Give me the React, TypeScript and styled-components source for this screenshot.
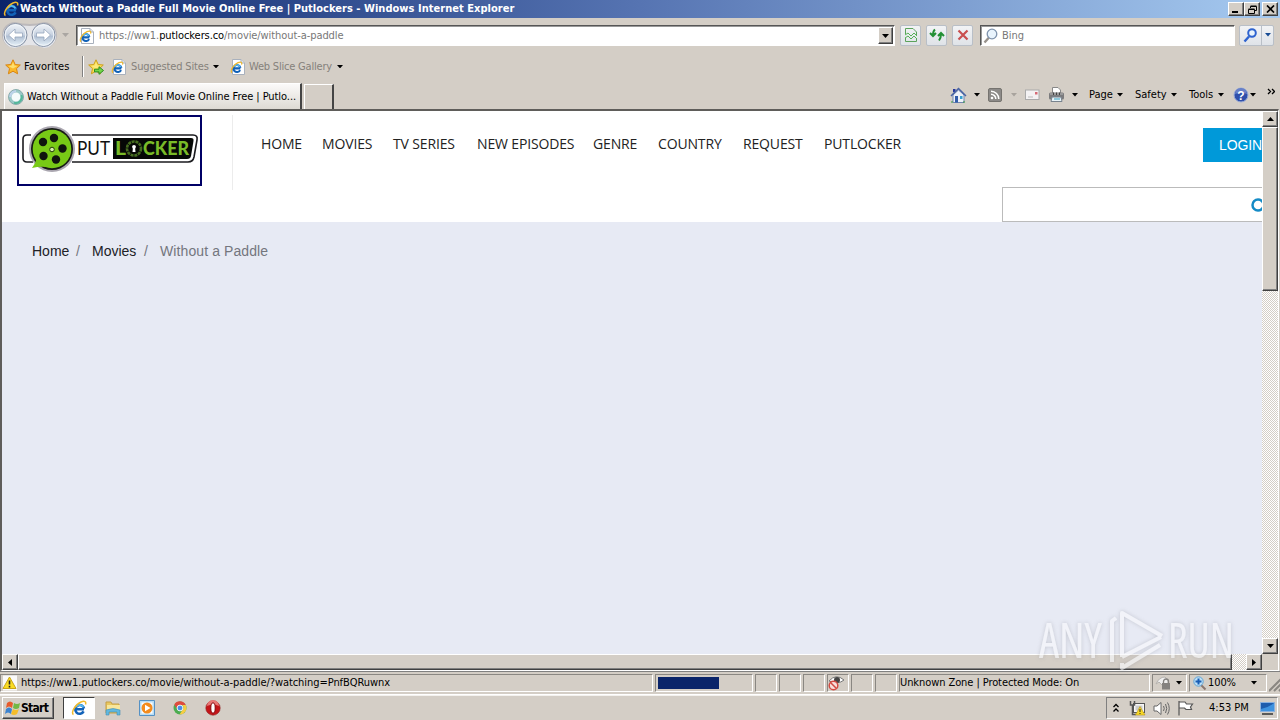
import React from 'react';
import styled, { createGlobalStyle, css } from 'styled-components';

const GlobalStyle = createGlobalStyle`
  * { box-sizing: border-box; }
  body { margin: 0; overflow: hidden; }
  svg { display: block; flex: none; }
`;

const face = '#d4cec6';
const ui = css`
  font-family: 'DejaVu Sans Condensed', 'DejaVu Sans', sans-serif;
  font-stretch: condensed;
  font-size: 11px;
  line-height: 14px;
  white-space: nowrap;
`;
const raised = css`
  border: 1px solid;
  border-color: #fff #404040 #404040 #fff;
  box-shadow: inset -1px -1px #808080;
`;

const Screen = styled.div`
  width: 1280px; height: 720px; overflow: hidden;
  display: flex; flex-direction: column;
  background: ${face}; color: #000; ${ui}
`;
const Text = styled.span<{ $w?: number; $ls?: number; $c?: string; $ml?: number }>`
  flex: none;
  width: ${p => (p.$w ? p.$w + 'px' : 'auto')};
  letter-spacing: ${p => p.$ls ?? 0}px;
  color: ${p => p.$c ?? '#000'};
  margin-left: ${p => p.$ml ?? 0}px;
  white-space: pre;
`;
const Space = styled.div<{ $w?: number }>`
  ${p => (p.$w ? `flex: none; width: ${p.$w}px;` : 'flex: 1;')}
`;

const TitleBar = styled.div`
  height: 18px; flex: none; display: flex; align-items: center; padding: 0 2px 0 3px;
  background: linear-gradient(90deg, #0a246a, #5674b2 50%, #a6caf0);
`;
const Title = styled.div`
  ${ui} font-weight: bold; color: #fff; margin-left: 1px; letter-spacing: 0.03px;
`;
const WinButton = styled.div<{ $ml?: number }>`
  width: 16px; height: 14px; background: ${face}; ${raised}
  margin-left: ${p => p.$ml ?? 0}px;
  display: flex; align-items: center; justify-content: center;
`;

const AddressRow = styled.div`
  height: 34px; flex: none; display: flex; align-items: center; padding: 0 6px 0 2px;
`;
const Field = styled.div<{ $w: number; $ml: number }>`
  width: ${p => p.$w}px; height: 21px; margin-left: ${p => p.$ml}px; flex: none;
  background: #fff; border: 1px solid; border-color: #555 #fff #fff #555;
  box-shadow: inset 1px 1px #999;
  display: flex; align-items: center; padding: 1px 1px 0 2px;
`;
const DropButton = styled.div`
  width: 15px; height: 17px; background: ${face}; ${raised}
  display: flex; align-items: center; justify-content: center;
`;
const ToolButton = styled.div<{ $w?: number; $ml?: number }>`
  width: ${p => p.$w ?? 21}px; height: 21px; margin-left: ${p => p.$ml ?? 5}px; flex: none;
  border: 1px solid #b9bfc7; border-radius: 2px;
  background: linear-gradient(#f2f3f5, #dfe3e8);
  display: flex; align-items: center; justify-content: center;
`;
const SplitPart = styled.div`
  height: 19px; width: 12px; border-left: 1px solid #b9bfc7;
  display: flex; align-items: center; justify-content: center;
`;

const FavoritesRow = styled.div`
  height: 29px; flex: none; display: flex; align-items: center; padding-left: 5px;
`;
const Divider = styled.div`
  width: 2px; height: 21px; margin: 0 4px 0 12px;
  border-left: 1px solid #808080; border-right: 1px solid #fff;
`;

const TabRow = styled.div`
  height: 28px; flex: none; display: flex; align-items: flex-end; padding-left: 4px;
`;
const Tab = styled.div`
  width: 298px; height: 26px; display: flex; align-items: center; padding: 0 0 0 3px;
  background: linear-gradient(#fbfaf9, #dedad4);
  border: 1px solid #fff; border-right: 2px solid #444; border-bottom: 0;
`;
const NewTab = styled.div`
  width: 30px; height: 25px; margin-left: 2px;
  border: 1px solid #fff; border-right: 2px solid #444; border-bottom: 0;
`;
const CommandBar = styled.div`
  flex: 1; height: 28px; display: flex; align-items: center; padding-left: 616px;
`;
const Chevrons = styled.svg`
  margin-bottom: 6px;
`;

const Viewport = styled.div`
  height: 562px; flex: none; display: grid; margin-right: 1px;
  grid-template: 543px 16px / 1260px 16px;
  border: 2px solid; border-width: 2px 1px 1px 2px; border-color: #5f5d5a #fff #fff #5f5d5a;
`;
const Page = styled.div`
  overflow: hidden; background: #e7eaf4; font-family: 'Liberation Sans', Arial, sans-serif;
  display: flex; flex-direction: column;
`;
const Header = styled.div`
  height: 111px; flex: none; background: #fff; display: flex; flex-direction: column;
`;
const HeaderTop = styled.div`
  height: 76px; display: flex; align-items: flex-start; padding: 4px 0 0 15px;
`;
const LogoLink = styled.div`
  width: 185px; height: 71px; border: 2px solid #000066; flex: none;
`;
const NavBox = styled.div`
  margin-left: 30px; height: 75px; border-left: 1px solid #ececec; padding: 18px 0 0 28px;
  display: flex; width: 971px; flex: none;
`;
const NavItem = styled.div<{ $w: number }>`
  width: ${p => p.$w}px; flex: none; white-space: nowrap;
  font: 14px/22px 'Open Sans', sans-serif; color: #222; letter-spacing: -0.15px;
`;
const Login = styled.div`
  width: 90px; height: 34px; margin-top: 13px; flex: none; padding-left: 16px;
  background: #0099d9; color: #fff; font-size: 14px; line-height: 34px; letter-spacing: -0.1px;
`;
const SearchBox = styled.div`
  width: 290px; height: 35px; flex: none; margin-left: 1000px; border: 1px solid #bbb; background: #fff;
  display: flex; align-items: center; padding-left: 248px;
`;
const Breadcrumb = styled.div`
  display: flex; padding: 19px 0 0 30px; font-size: 14px; line-height: 20px;
`;
const Crumb = styled.span<{ $w?: number; $muted?: boolean }>`
  width: ${p => (p.$w ? p.$w + 'px' : 'auto')};
  color: ${p => (p.$muted ? '#74767e' : '#202126')};
  letter-spacing: ${p => (p.$muted ? 0.1 : 0)}px;
`;

const dither = css`
  background-color: #fff;
  background-image: conic-gradient(#d4cec6 25%, transparent 0 50%, #d4cec6 0 75%, transparent 0);
  background-size: 2px 2px;
`;
const VScroll = styled.div`
  display: flex; flex-direction: column; ${dither}
`;
const HScroll = styled.div`
  display: flex; ${dither}
`;
const ScrollButton = styled.div`
  width: 16px; height: 16px; flex: none; background: ${face}; ${raised}
  display: flex; align-items: center; justify-content: center;
`;
const Thumb = styled.div<{ $w: number; $h: number }>`
  width: ${p => p.$w}px; height: ${p => p.$h}px; flex: none; background: ${face}; ${raised}
`;

const StatusBar = styled.div`
  height: 24px; flex: none; display: flex; padding: 2px 0 2px; gap: 2px; border-top: 1px solid #808080;
  border-bottom: 1px solid #fff;
`;
const Pane = styled.div<{ $w: number; $pad?: number }>`
  width: ${p => p.$w}px; flex: none; display: flex; align-items: center; padding-left: ${p => p.$pad ?? 2}px;
  border: 1px solid; border-color: #8a8782 #fff #fff #8a8782; overflow: hidden;
`;
const Progress = styled.div`
  width: 61px; height: 12px; background: #0a246a;
`;

const TaskBar = styled.div`
  flex: 1; display: flex; align-items: center; padding: 0 2px 0 2px; border-top: 1px solid #f4f2ef;
`;
const Start = styled.div`
  width: 52px; height: 22px; ${raised} display: flex; align-items: center; padding-left: 1px;
  font-weight: bold; font-size: 12px; letter-spacing: -0.7px;
`;
const ActiveTask = styled.div`
  width: 32px; height: 22px; margin: 0 9px; background: #fff; border: 1px solid;
  border-color: #404040 #fff #fff #404040; display: flex; align-items: center; justify-content: center;
`;
const Tasks = styled.div`
  display: flex; align-items: center; gap: 18px; margin-left: 1px;
`;
const Tray = styled.div`
  width: 172px; height: 22px; border: 1px solid; border-color: #808080 #fff #fff #808080;
  display: flex; align-items: center; padding-left: 6px;
`;
const Watermark = styled.svg`
  position: absolute; left: 1030px; top: 602px; pointer-events: none;
`;

const Arrow = ({ dir = 'down', color = '#000', size = 7 }: { dir?: string; color?: string; size?: number }) => {
  const d: Record<string, string> = {
    down: 'M0 0H7L3.5 4Z', up: 'M0 4H7L3.5 0Z', left: 'M4 0V7L0 3.5Z', right: 'M0 0V7L4 3.5Z',
  };
  const vertical = dir === 'left' || dir === 'right';
  return (
    <svg width={vertical ? (size * 4) / 7 : size} height={vertical ? size : (size * 4) / 7} viewBox={vertical ? '0 0 4 7' : '0 0 7 4'}>
      <path d={d[dir]} fill={color} />
    </svg>
  );
};

const IELetter = () => (
  <g fill="none">
    <path d="M13 9.2H5.2M12.6 11.4A4.4 4.4 0 1 1 13 8.6" stroke="#1262b8" strokeWidth="2.6" />
    <path d="M12.4 7.4A4.2 4.2 0 0 0 5 7" stroke="#55b9ef" strokeWidth="1.8" />
    <path d="M2.5 14.5C-.5 13 4 4.500 10 2C13.500.5 15.500 1.500 14.500 4.500" stroke="#f0b92b" strokeWidth="1.5" />
  </g>
);
const IEIcon = ({ size = 16 }: { size?: number }) => (
  <svg width={size} height={size} viewBox="0 0 16 16"><IELetter /></svg>
);
const IEPage = () => (
  <svg width="16" height="16" viewBox="0 0 16 16">
    <path d="M2.500.5H11L14.500 4V15.500H2.500Z" fill="#fff" stroke="#a9b1bd" />
    <path d="M11 .5V4H14.500" fill="#dde3ea" stroke="#a9b1bd" />
    <g transform="translate(0 2) scale(.8)"><IELetter /></g>
  </svg>
);
const Star = ({ add }: { add?: boolean }) => (
  <svg width="16" height="16" viewBox="0 0 16 16">
    <path d="M8 .8L10.200 5.500L15.300 6L11.500 9.600L12.600 14.800L8 12.200L3.400 14.800L4.500 9.600L.7 6L5.800 5.500Z" fill={add ? '#f8dc55' : '#fbb829'} stroke={add ? '#cda01c' : '#d98512'} />
    <path d="M8 3L9.300 6.500L12.500 7L8 9.500L5 8L3.500 7L6.700 6.500Z" fill="#fff08c" opacity=".7" />
    {add && <path d="M6.500 10.200H11V7.700L15.500 11.500L11 15.300V12.900H6.500Z" fill="#75d64a" stroke="#2a8c20" />}
  </svg>
);

const NavButtons = () => (
  <svg width="56" height="28" viewBox="0 0 56 28">
    <defs>
      <linearGradient id="orb" x1="0" y1="0" x2="0" y2="1">
        <stop offset="0" stopColor="#f2f5f9" /><stop offset=".5" stopColor="#c6d1e0" /><stop offset=".55" stopColor="#b0bfd3" /><stop offset="1" stopColor="#e8f3fa" />
      </linearGradient>
    </defs>
    <path d="M13 1Q28 5 42 1A13 13 0 0 1 42 27Q28 21 13 27A13 13 0 0 1 13 1" fill="#bcb9bb" />
    <path d="M13 3Q28 7 42 3A12 12 0 0 1 42 27Q28 21 13 27A12 12 0 0 1 13 3" fill="#e4e5e9" />
    {[13.5, 41.5].map((x, i) => (
      <g key={x}>
        <circle cx={x} cy="14" r="11.500" fill="url(#orb)" stroke="#8792a5" />
        <circle cx={x} cy="14" r="10.300" fill="none" stroke="#f1f5f9" />
        <path transform={i ? 'translate(55 0) scale(-1 1)' : undefined} d="M6.500 14L13 8V12H20.500V16H13V20Z" fill="#fff" stroke="#95a5bb" strokeWidth=".8" />
      </g>
    ))}
  </svg>
);

const Lens = ({ color = '#7f93ad', flip }: { color?: string; flip?: boolean }) => (
  <svg width="15" height="16" viewBox="0 0 15 16">
    <path d="M6 9.500L1.500 14.500" stroke={flip ? color : '#98928c'} strokeWidth="2.400" />
    <circle cx="9" cy="6" r={flip ? 3.8 : 4.8} fill="#e9f4fd" stroke={color} strokeWidth={flip ? 2 : 1.3} />
  </svg>
);

const Spinner = () => (
  <svg width="16" height="16" viewBox="0 0 16 16" fill="none">
    <circle cx="8" cy="8" r="6" fill="#f4fbfb" stroke="#99c8c6" strokeWidth="3" />
    <path d="M2 8A6 6 0 0 1 8 2" stroke="#bcd3ea" strokeWidth="2.600" />
    <path d="M13.500 6A6 6 0 0 1 6 13.700" stroke="#53b99a" strokeWidth="2" />
    <circle cx="8" cy="8" r="7.500" stroke="#799f9f" strokeWidth=".8" />
  </svg>
);

const HomeIcon = () => (
  <svg width="17" height="17" viewBox="0 0 17 17">
    <path d="M3 2H5.500V5H3Z" fill="#25359b" />
    <path d="M3 8L8.500 3L14 8V15.500H3Z" fill="#edf1f8" stroke="#7086b0" />
    <path d="M1 9L8.500 1.500L16 9" fill="none" stroke="#4863a4" strokeWidth="1.500" />
    <path d="M5 9H8V15.500H5Z" fill="#315caa" /><path d="M10 9H12.500V12H10Z" fill="#37a0d0" />
    <path d="M2 14V16M14 14V16" stroke="#329640" />
  </svg>
);
const FeedIcon = () => (
  <svg width="14" height="14" viewBox="0 0 14 14" fill="none">
    <rect x=".5" y=".5" width="13" height="13" rx="1.500" fill="#8c8a88" stroke="#75736f" />
    <circle cx="4" cy="10" r="1.300" fill="#fff" /><path d="M3 6.200A4.800 4.800 0 0 1 7.800 11M3 3.200A7.800 7.800 0 0 1 10.800 11" stroke="#fff" strokeWidth="1.500" />
  </svg>
);
const MailIcon = () => (
  <svg width="15" height="12" viewBox="0 0 15 12">
    <rect x=".5" y="1" width="13.500" height="9.500" fill="#f4f2f3" stroke="#aaa" /><path d="M10 3H12.500V5.500H10Z" fill="#d66a75" /><path d="M3 8H8" stroke="#bbb" />
  </svg>
);
const PrintIcon = () => (
  <svg width="17" height="16" viewBox="0 0 17 16">
    <path d="M4.500.5H10L12.500 3V7H4.500Z" fill="#fff" stroke="#888" />
    <rect x="1" y="5.500" width="15" height="7" rx="1.500" fill="#7b7b7d" />
    <path d="M2 7H15" stroke="#b8b8b8" /><path d="M5.500 8V5.500M8.500 8V5.500M11.500 8V5.500" stroke="#444" />
    <path d="M4 10H13L14 14.500H3Z" fill="#e9f4f8" stroke="#78838e" /><path d="M6 12H12" stroke="#349fc0" />
  </svg>
);
const HelpIcon = () => (
  <svg width="16" height="16" viewBox="0 0 16 16">
    <circle cx="8" cy="8" r="7" fill="#2f4fab" stroke="#9caed8" />
    <path d="M2 7A6 6 0 0 1 14 7Q8 4 2 7" fill="#6880c8" />
    <text x="8" y="12.500" textAnchor="middle" fontFamily="Liberation Sans, sans-serif" fontWeight="bold" fontSize="12" fill="#fff">?</text>
  </svg>
);

const PutlockerLogo = () => (
  <svg width="181" height="67" viewBox="0 0 181 67">
    <path d="M12 18H8Q4 18 4 22V41Q4 45 8 45H14M53 18H174Q179 18 178 23L175 40Q174 45 169 45H53" fill="none" stroke="#1b1b1f" strokeWidth="1.600" />
    <path d="M94 21H172Q175 21 174.500 24L172 39Q171.500 42 168 42H94Z" fill="#060806" />
    <circle cx="33" cy="32" r="23" fill="#aaa6b0" /><circle cx="33" cy="32" r="21" fill="#171a16" />
    <circle cx="33" cy="32" r="19.300" fill="#78ca16" />
    <path d="M13 51Q17 46 18 40L28 50Q21 49 13 51Z" fill="#78ca16" />
    {[[35, 21], [24, 25], [43.5, 31.5], [24.5, 39], [37, 42.5]].map(([x, y]) => <circle key={x} cx={x} cy={y} r="4.200" fill="#10150e" />)}
    <circle cx="33" cy="32.500" r="2.300" fill="#d8f1ae" stroke="#253b0c" strokeWidth="1" />
    <text x="58" y="38" fontFamily="Lato, sans-serif" fontSize="18.500" textLength="33" lengthAdjust="spacingAndGlyphs" fill="#111">PUT</text>
    <g fontFamily="Lato, sans-serif" fontWeight="900" fontSize="18" fill="#79bb28">
      <text x="96" y="38" textLength="11" lengthAdjust="spacingAndGlyphs">L</text>
      <text x="124" y="38" textLength="46" lengthAdjust="spacingAndGlyphs">CKER</text>
    </g>
    <circle cx="115" cy="31.500" r="7" fill="none" stroke="#466d20" strokeWidth="2.600" strokeDasharray="3 .8" />
    <circle cx="115" cy="29.800" r="1.900" fill="#fff" /><path d="M114 30H116L116.500 35H113.500Z" fill="#fff" />
  </svg>
);

const WarningPage = () => (
  <svg width="16" height="16" viewBox="0 0 16 16">
    <path d="M1 .5H15V15.500H1Z" fill="#fafafa" />
    <path d="M7.500 2L14 13.500H1Z" fill="#fbdc21" stroke="#c8a419" /><path d="M7.500 5.500V9.500M7.500 10.800V12.500" stroke="#222" strokeWidth="1.600" />
  </svg>
);
const PrivacyIcon = () => (
  <svg width="18" height="16" viewBox="0 0 18 16" fill="none">
    <path d="M1 6Q8-2 16 5Q10 10 1 6Z" fill="#fff" stroke="#777" /><circle cx="9" cy="5" r="3" fill="#444" />
    <circle cx="5.500" cy="10.500" r="4.300" fill="#f7dfdc" stroke="#d34b43" strokeWidth="1.500" /><path d="M2.500 7.500L8.500 13.500" stroke="#d34b43" strokeWidth="1.500" />
  </svg>
);
const LockedFilter = () => (
  <svg width="17" height="16" viewBox="0 0 17 16">
    <path d="M1 9Q4 2 10 2L13 5V10H7L4 7Z" fill="#eee" stroke="#b5b2ae" /><rect x="7" y="8" width="8" height="6.500" fill="#84827f" />
    <path d="M8.500 8V6.500A2.500 2.500 0 0 1 13.500 6.500V8" fill="none" stroke="#84827f" strokeWidth="1.300" />
  </svg>
);
const ZoomIcon = () => (
  <svg width="14" height="15" viewBox="0 0 14 15">
    <path d="M8 9L12.500 13.500" stroke="#8b7770" strokeWidth="2" /><circle cx="5.500" cy="5.500" r="4.700" fill="#bddff6" stroke="#60a4d5" />
    <path d="M5.500 2.500V8.500M2.500 5.500H8.500" stroke="#185db4" strokeWidth="2" />
  </svg>
);
const Flag = () => (
  <svg width="17" height="17" viewBox="0 0 17 17">
    <path d="M3 3Q6 0 9 3L8 8Q5 5 2 8Z" fill="#e75b2b" /><path d="M10 3Q13 5 16 3L15 8Q12 10 9 8Z" fill="#72b843" />
    <path d="M2 9Q5 6 8 9L7 14Q4 11 1 14Z" fill="#3c83d0" /><path d="M9 9Q12 11 15 9L13 14Q10 16 7 14Z" fill="#f5bd2b" />
  </svg>
);
const Folder = () => (
  <svg width="16" height="16" viewBox="0 0 16 16">
    <path d="M1 2H6L7 4H14V13H1Z" fill="#e9c85f" stroke="#c59e45" /><path d="M2 5H15V11H2Z" fill="#f8e69b" />
    <path d="M1 10Q8 7 15 10V15H12V12H4V15H1Z" fill="#61b8df" stroke="#438eb4" strokeWidth=".6" />
  </svg>
);
const Player = () => (
  <svg width="16" height="16" viewBox="0 0 16 16">
    <path d="M.5.5H15.500V15.500H.5Z" fill="#b8ddf5" stroke="#5591c4" /><path d="M2.500 2.500H13.500V13.500H2.500Z" fill="#fff" />
    <circle cx="8" cy="8" r="5.500" fill="#f38b1d" /><path d="M6 4.700L11.500 8L6 11.300Z" fill="#fff" />
  </svg>
);
const Chrome = () => (
  <svg width="14" height="14" viewBox="0 0 14 14">
    <circle cx="7" cy="7" r="6.500" fill="#4cac50" /><path d="M1.300 3.500A6.500 6.500 0 0 1 12.700 4H7A3 3 0 0 0 4.200 8Z" fill="#df4b3e" />
    <path d="M12.700 4A6.500 6.500 0 0 1 6.500 13.500L9.700 8.500A3 3 0 0 0 9 4Z" fill="#f7cd43" /><circle cx="7" cy="7" r="2.900" fill="#4a8de7" stroke="#fff" strokeWidth=".9" />
  </svg>
);
const Opera = () => (
  <svg width="16" height="16" viewBox="0 0 16 16">
    <circle cx="8" cy="8" r="7.200" fill="#c41519" stroke="#8e2222" strokeWidth=".6" /><path d="M2 6A6 6 0 0 1 14 6Q8 3 2 6" fill="#e77775" /><ellipse cx="8" cy="8" rx="2.200" ry="5.200" fill="#fff" stroke="#85070d" />
  </svg>
);
const NetworkIcon = () => (
  <svg width="17" height="16" viewBox="0 0 17 16">
    <rect x="4.500" y="3.500" width="11" height="9" fill="#f7f7f7" stroke="#555" /><path d="M6.500 5.500H13.500V10.500H6.500Z" fill="#ccc" />
    <path d="M1.500 1V5H5.500V1M3.500 5V14.500H7" fill="none" stroke="#555" strokeWidth="1.500" /><path d="M11 6.500L16 15H6.500Z" fill="#f8d825" stroke="#b79418" strokeWidth=".6" /><path d="M11 9V12M11 13V14" stroke="#222" />
  </svg>
);
const SoundIcon = () => (
  <svg width="17" height="15" viewBox="0 0 17 15" fill="none" stroke="#666">
    <path d="M1 5H4L8 1.500V13.500L4 10H1Z" fill="#fff" /><path d="M10.500 5Q12 7.500 10.500 10M12.500 3Q15 7.500 12.500 12M14.500 1.500Q18 7.500 14.500 13.500" />
  </svg>
);
const ActionFlag = () => (
  <svg width="17" height="16" viewBox="0 0 17 16"><path d="M2 1V15.500M2.500 2H8L9.500 4H15.500L13.500 7L14.500 9.500H9L7.500 8H2.500" fill="#fff" stroke="#555" strokeWidth="1.200" /></svg>
);
const Desktop = () => (
  <svg width="15" height="13" viewBox="0 0 15 13"><path d="M.5.5H14.500V9.500H.5Z" fill="#1f5dad" stroke="#8ab1df" /><path d="M1 7Q8 6 14 1V9H1Z" fill="#3f93df" /><path d="M2 12H13" stroke="#333" strokeWidth="1.500" /></svg>
);

const navItems: [string, number][] = [
  ['HOME', 61], ['MOVIES', 71], ['TV SERIES', 84], ['NEW EPISODES', 116],
  ['GENRE', 65], ['COUNTRY', 85], ['REQUEST', 81], ['PUTLOCKER', 90],
];

export default function App() {
  return (
    <Screen>
      <GlobalStyle />
      <TitleBar>
        <IEIcon />
        <Title>Watch Without a Paddle Full Movie Online Free | Putlockers - Windows Internet Explorer</Title>
        <Space />
        <WinButton><svg width="8" height="8"><path d="M0 7H6" stroke="#000" strokeWidth="2" /></svg></WinButton>
        <WinButton><svg width="9" height="9" fill="none"><path d="M2.500 3V1.500H8.500V5.500H7M2.500 1H8.500M.5 4.500H6.500V8.500H.5ZM.5 4H6.500" stroke="#000" /></svg></WinButton>
        <WinButton $ml={2}><svg width="9" height="8"><path d="M1 .5L8 7.500M8 .5L1 7.500" stroke="#000" strokeWidth="1.700" /></svg></WinButton>
      </TitleBar>

      <AddressRow>
        <NavButtons />
        <Space $w={4} /><Arrow color="#aaa6a2" />
        <Field $w={819} $ml={7}>
          <IEPage />
          <Text $ml={4} $c="#777" $ls={-0.08}>https://ww1.<Text $ls={-0.08}>putlockers.co</Text>/movie/without-a-paddle</Text>
          <Space /><DropButton><Arrow /></DropButton>
        </Field>
        <ToolButton><svg width="14" height="16" viewBox="0 0 14 16" fill="none"><path d="M1.500 7V1.500H9L12.500 5V8M1.500 11V14.500H12.500V12" stroke="#5ba35b" /><path d="M1 8L4 6L7 9L10 6L13 9M1 11L4 9L7 12L10 9L13 12" stroke="#55b255" /></svg></ToolButton>
        <ToolButton><svg width="16" height="14" viewBox="0 0 16 14" fill="none" stroke="#239034" strokeWidth="2"><path d="M6 1.500Q4 3 4 7M1 5L4 8L7 5M10 12.500Q12 10 12 6M9 8L12 5L15 8" /></svg></ToolButton>
        <ToolButton><svg width="12" height="12"><path d="M1.500 1.500L10.500 10.500M10.500 1.500L1.500 10.500" stroke="#c94f4f" strokeWidth="2.200" /></svg></ToolButton>
        <Field $w={255} $ml={7}><Lens /><Text $ml={4} $c="#777">Bing</Text></Field>
        <ToolButton $w={35} $ml={4}><Space $w={3} /><Lens flip color="#2e63cf" /><Space $w={3} /><SplitPart><Arrow size={6} color="#174b94" /></SplitPart></ToolButton>
      </AddressRow>

      <FavoritesRow>
        <Star /><Text $ml={3} $w={46} $ls={0.1}>Favorites</Text>
        <Divider /><Star add />
        <Space $w={7} /><IEPage /><Text $ml={4} $w={79} $c="#85817b" $ls={-0.15}>Suggested Sites</Text><Space $w={3} /><Arrow size={6} />
        <Space $w={11} /><IEPage /><Text $ml={3} $w={85} $c="#85817b" $ls={-0.2}>Web Slice Gallery</Text><Space $w={3} /><Arrow size={6} />
      </FavoritesRow>

      <TabRow>
        <Tab><Spinner /><Text $ml={3} $ls={-0.07}>Watch Without a Paddle Full Movie Online Free | Putlo...</Text></Tab>
        <NewTab />
        <CommandBar>
          <HomeIcon /><Space $w={7} /><Arrow size={6} />
          <Space $w={8} /><FeedIcon /><Space $w={9} /><Arrow size={6} color="#a8a39d" />
          <Space $w={8} /><MailIcon /><Space $w={8} /><PrintIcon /><Space $w={7} /><Arrow size={6} />
          <Text $ml={11} $w={25}>Page</Text><Space $w={3} /><Arrow size={6} />
          <Text $ml={12} $w={33}>Safety</Text><Space $w={3} /><Arrow size={6} />
          <Text $ml={12} $w={26}>Tools</Text><Space $w={3} /><Arrow size={6} />
          <Space $w={9} /><HelpIcon /><Space $w={1} /><Arrow size={6} />
          <Space $w={11} />
          <Chevrons width="8" height="8"><path d="M1 1L3.500 3.500L1 6M5 1L7.500 3.500L5 6" fill="none" stroke="#000" strokeWidth="1.300" /></Chevrons>
        </CommandBar>
      </TabRow>

      <Viewport>
        <Page>
          <Header>
            <HeaderTop>
              <LogoLink><PutlockerLogo /></LogoLink>
              <NavBox>{navItems.map(([label, w]) => <NavItem key={label} $w={w}>{label}</NavItem>)}</NavBox>
              <Login>LOGIN</Login>
            </HeaderTop>
            <SearchBox><svg width="18" height="18" fill="none" stroke="#158bc6" strokeWidth="2.500"><circle cx="7" cy="9" r="5.500" /><path d="M11 13L16 17" /></svg></SearchBox>
          </Header>
          <Breadcrumb>
            <Crumb $w={44}>Home</Crumb><Crumb $muted $w={16}>/</Crumb>
            <Crumb $w={52}>Movies</Crumb><Crumb $muted $w={16}>/</Crumb>
            <Crumb $muted>Without a Paddle</Crumb>
          </Breadcrumb>
        </Page>
        <VScroll>
          <ScrollButton><Arrow dir="up" /></ScrollButton><Thumb $w={16} $h={164} /><Space /><ScrollButton><Arrow /></ScrollButton>
        </VScroll>
        <HScroll>
          <ScrollButton><Arrow dir="left" /></ScrollButton><Thumb $w={1214} $h={16} /><Space /><ScrollButton><Arrow dir="right" /></ScrollButton>
        </HScroll>
      </Viewport>

      <StatusBar>
        <Pane $w={653} $pad={1}><WarningPage /><Text $ml={3} $ls={-0.06}>https://ww1.putlockers.co/movie/without-a-paddle/?watching=PnfBQRuwnx</Text></Pane>
        <Pane $w={98}><Progress /></Pane>
        <Pane $w={22} /><Pane $w={22} /><Pane $w={22} />
        <Pane $w={22} $pad={0}><PrivacyIcon /></Pane>
        <Pane $w={22} /><Pane $w={22} />
        <Pane $w={251} $pad={0}><Text $ls={-0.08}>Unknown Zone | Protected Mode: On</Text></Pane>
        <Pane $w={35}><LockedFilter /><Space $w={4} /><Arrow size={6} /></Pane>
        <Pane $w={78} $pad={0}><Space $w={3} /><ZoomIcon /><Text $ml={1} $w={28} $ls={-0.1}>100%</Text><Space $w={15} /><Arrow size={6} /></Pane>
        <svg width="12" height="18"><path d="M0 17L12 5M5 17L12 10M10 17L12 15" stroke="#8a8782" strokeWidth="2" /></svg>
      </StatusBar>

      <TaskBar>
        <Start><Flag />Start</Start>
        <ActiveTask><IEIcon /></ActiveTask>
        <Tasks><Folder /><Player /><Chrome /><Opera /></Tasks>
        <Space />
        <Tray>
          <svg width="6" height="10" fill="none" stroke="#000" strokeWidth="1.300"><path d="M.5 4L3 1.500L5.500 4M.5 8.500L3 6L5.500 8.500" /></svg>
          <Space $w={10} /><NetworkIcon /><Space $w={7} /><SoundIcon /><Space $w={7} /><ActionFlag />
          <Text $ml={15} $w={41}>4:53 PM</Text><Space $w={10} /><Desktop />
        </Tray>
      </TaskBar>

      <Watermark width="220" height="75" viewBox="0 0 220 75">
        <defs><filter id="soft" x="-10%" y="-10%" width="120%" height="120%"><feDropShadow dx="0" dy="0" stdDeviation="2" floodColor="#8a8c94" floodOpacity=".6" /></filter></defs>
        <g filter="url(#soft)" opacity=".65" fill="#f8f9fc">
          <g fontFamily="Open Sans, sans-serif" fontSize="50">
            <text x="9" y="56" textLength="63" lengthAdjust="spacingAndGlyphs">ANY</text>
            <text x="138" y="56" textLength="66" lengthAdjust="spacingAndGlyphs">RUN</text>
          </g>
          <path d="M86 16L82 19V60M92 55V11L132 34M92 55L131 35M130 43L92 66V61" fill="none" stroke="#f8f9fc" strokeWidth="4" strokeLinejoin="round" />
        </g>
      </Watermark>
    </Screen>
  );
}
